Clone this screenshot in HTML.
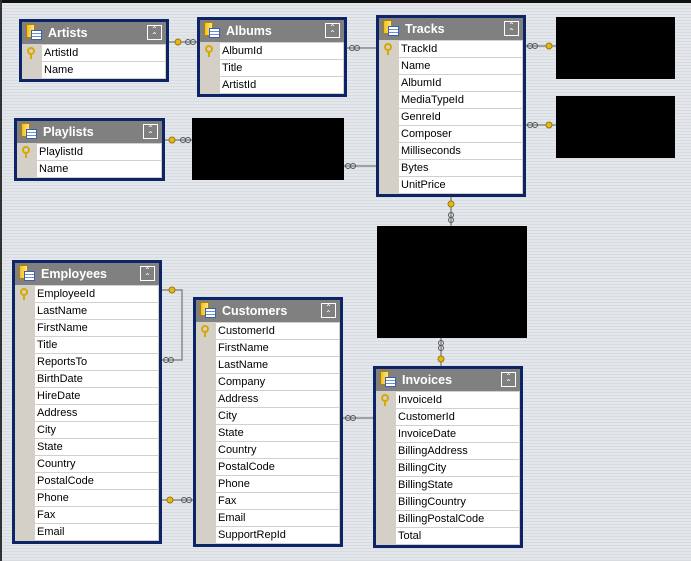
<!DOCTYPE html>
<html><head><meta charset="utf-8"><style>
*{margin:0;padding:0;box-sizing:border-box}
body{width:691px;height:561px;overflow:hidden;position:relative;font-family:"Liberation Sans",sans-serif;
background:repeating-linear-gradient(180deg,#e3e7eb 0,#e3e7eb 2px,#d7dce1 2px,#d7dce1 3px);}
.top{position:absolute;left:0;top:0;width:691px;height:3px;background:#111}
.lft{position:absolute;left:0;top:0;width:2px;height:561px;background:#333}
.t{position:absolute;width:150px;border:3px solid #0d2466;background:#d4d0c8}
.h{height:22px;margin-bottom:1px;background:#808080;color:#fff;font-weight:bold;font-size:12.5px;line-height:22px;padding-left:26px;position:relative}
.h i{position:absolute;left:4px;top:2px;width:9px;height:14px;background:linear-gradient(90deg,#f0c020,#ffe680);border:1px solid #b08000}
.h b{position:absolute;left:9px;top:8px;width:11px;height:10px;background:repeating-linear-gradient(180deg,#fff 0,#fff 2px,#6b8fd0 2px,#6b8fd0 3px);border:1px solid #3a5fb0}
.h s{position:absolute;right:4px;top:3px;width:15px;height:15px;border:1px solid #fff;text-decoration:none;font-size:8px;line-height:6px;padding-top:1px;text-align:center;font-weight:normal}
.r{height:17px;margin-left:20px;background:#fff;border-bottom:1px solid #d4d0c8;font-size:11px;line-height:17px;padding-left:2px;color:#000;margin-right:1px}
.k{position:relative}
.k:before{content:"";position:absolute;left-15px;left:-15px;top:2px;width:4px;height:4px;border:2px solid #d8a800;border-radius:50%}
.k:after{content:"";position:absolute;left:-12px;top:9px;width:2px;height:5px;background:#d8a800}
.bk{position:absolute;background:#000}
</style></head><body>
<div class="top"></div><div class="lft"></div>
<div class="bk" style="left:556px;top:17px;width:119px;height:62px"></div>
<div class="bk" style="left:556px;top:96px;width:119px;height:62px"></div>
<div class="bk" style="left:192px;top:118px;width:152px;height:62px"></div>
<div class="bk" style="left:377px;top:226px;width:150px;height:112px"></div>
<svg style="position:absolute;left:0;top:0" width="691" height="561" fill="none" stroke="#8a8a8a" stroke-width="1.5">
<g>
<line x1="168" y1="42" x2="197" y2="42"/><line x1="346" y1="48" x2="376" y2="48"/>
<line x1="525" y1="46" x2="556" y2="46"/><line x1="525" y1="125" x2="556" y2="125"/>
<line x1="165" y1="140" x2="192" y2="140"/><line x1="344" y1="166" x2="376" y2="166"/>
<line x1="451" y1="196" x2="451" y2="226"/><line x1="441" y1="338" x2="441" y2="366"/>
<polyline points="161,290 182,290 182,360 161,360"/>
<line x1="161" y1="500" x2="193" y2="500"/><line x1="342" y1="418" x2="373" y2="418"/>
</g>
<g fill="#e0b820" stroke="#a07800" stroke-width="1">
<circle cx="178" cy="42" r="3"/><circle cx="549" cy="46" r="3"/><circle cx="549" cy="125" r="3"/>
<circle cx="172" cy="140" r="3"/><circle cx="451" cy="204" r="3"/><circle cx="441" cy="359" r="3"/>
<circle cx="172" cy="290" r="3"/><circle cx="170" cy="500" r="3"/>
</g>
<g stroke="#555" stroke-width="1">
<circle cx="188" cy="42" r="2.5"/><circle cx="193" cy="42" r="2.5"/>
<circle cx="352" cy="48" r="2.5"/><circle cx="357" cy="48" r="2.5"/>
<circle cx="530" cy="46" r="2.5"/><circle cx="535" cy="46" r="2.5"/>
<circle cx="530" cy="125" r="2.5"/><circle cx="535" cy="125" r="2.5"/>
<circle cx="183" cy="140" r="2.5"/><circle cx="188" cy="140" r="2.5"/>
<circle cx="348" cy="166" r="2.5"/><circle cx="353" cy="166" r="2.5"/>
<circle cx="451" cy="215" r="2.5"/><circle cx="451" cy="220" r="2.5"/>
<circle cx="441" cy="343" r="2.5"/><circle cx="441" cy="348" r="2.5"/>
<circle cx="166" cy="360" r="2.5"/><circle cx="171" cy="360" r="2.5"/>
<circle cx="184" cy="500" r="2.5"/><circle cx="189" cy="500" r="2.5"/>
<circle cx="348" cy="418" r="2.5"/><circle cx="353" cy="418" r="2.5"/>
</g>
</svg>

<div class="t" style="left:19px;top:19px"><div class="h"><i></i><b></b>Artists<s>⌃<br>⌃</s></div>
<div class="r k">ArtistId</div><div class="r">Name</div></div>

<div class="t" style="left:197px;top:17px"><div class="h"><i></i><b></b>Albums<s>⌃<br>⌃</s></div>
<div class="r k">AlbumId</div><div class="r">Title</div><div class="r">ArtistId</div></div>

<div class="t" style="left:376px;top:15px"><div class="h"><i></i><b></b>Tracks<s>⌃<br>⌃</s></div>
<div class="r k">TrackId</div><div class="r">Name</div><div class="r">AlbumId</div><div class="r">MediaTypeId</div><div class="r">GenreId</div><div class="r">Composer</div><div class="r">Milliseconds</div><div class="r">Bytes</div><div class="r">UnitPrice</div></div>

<div class="t" style="left:14px;top:118px;width:151px"><div class="h"><i></i><b></b>Playlists<s>⌃<br>⌃</s></div>
<div class="r k">PlaylistId</div><div class="r">Name</div></div>

<div class="t" style="left:12px;top:260px"><div class="h"><i></i><b></b>Employees<s>⌃<br>⌃</s></div>
<div class="r k">EmployeeId</div><div class="r">LastName</div><div class="r">FirstName</div><div class="r">Title</div><div class="r">ReportsTo</div><div class="r">BirthDate</div><div class="r">HireDate</div><div class="r">Address</div><div class="r">City</div><div class="r">State</div><div class="r">Country</div><div class="r">PostalCode</div><div class="r">Phone</div><div class="r">Fax</div><div class="r">Email</div></div>

<div class="t" style="left:193px;top:297px"><div class="h"><i></i><b></b>Customers<s>⌃<br>⌃</s></div>
<div class="r k">CustomerId</div><div class="r">FirstName</div><div class="r">LastName</div><div class="r">Company</div><div class="r">Address</div><div class="r">City</div><div class="r">State</div><div class="r">Country</div><div class="r">PostalCode</div><div class="r">Phone</div><div class="r">Fax</div><div class="r">Email</div><div class="r">SupportRepId</div></div>

<div class="t" style="left:373px;top:366px"><div class="h"><i></i><b></b>Invoices<s>⌃<br>⌃</s></div>
<div class="r k">InvoiceId</div><div class="r">CustomerId</div><div class="r">InvoiceDate</div><div class="r">BillingAddress</div><div class="r">BillingCity</div><div class="r">BillingState</div><div class="r">BillingCountry</div><div class="r">BillingPostalCode</div><div class="r">Total</div></div>
</body></html>
